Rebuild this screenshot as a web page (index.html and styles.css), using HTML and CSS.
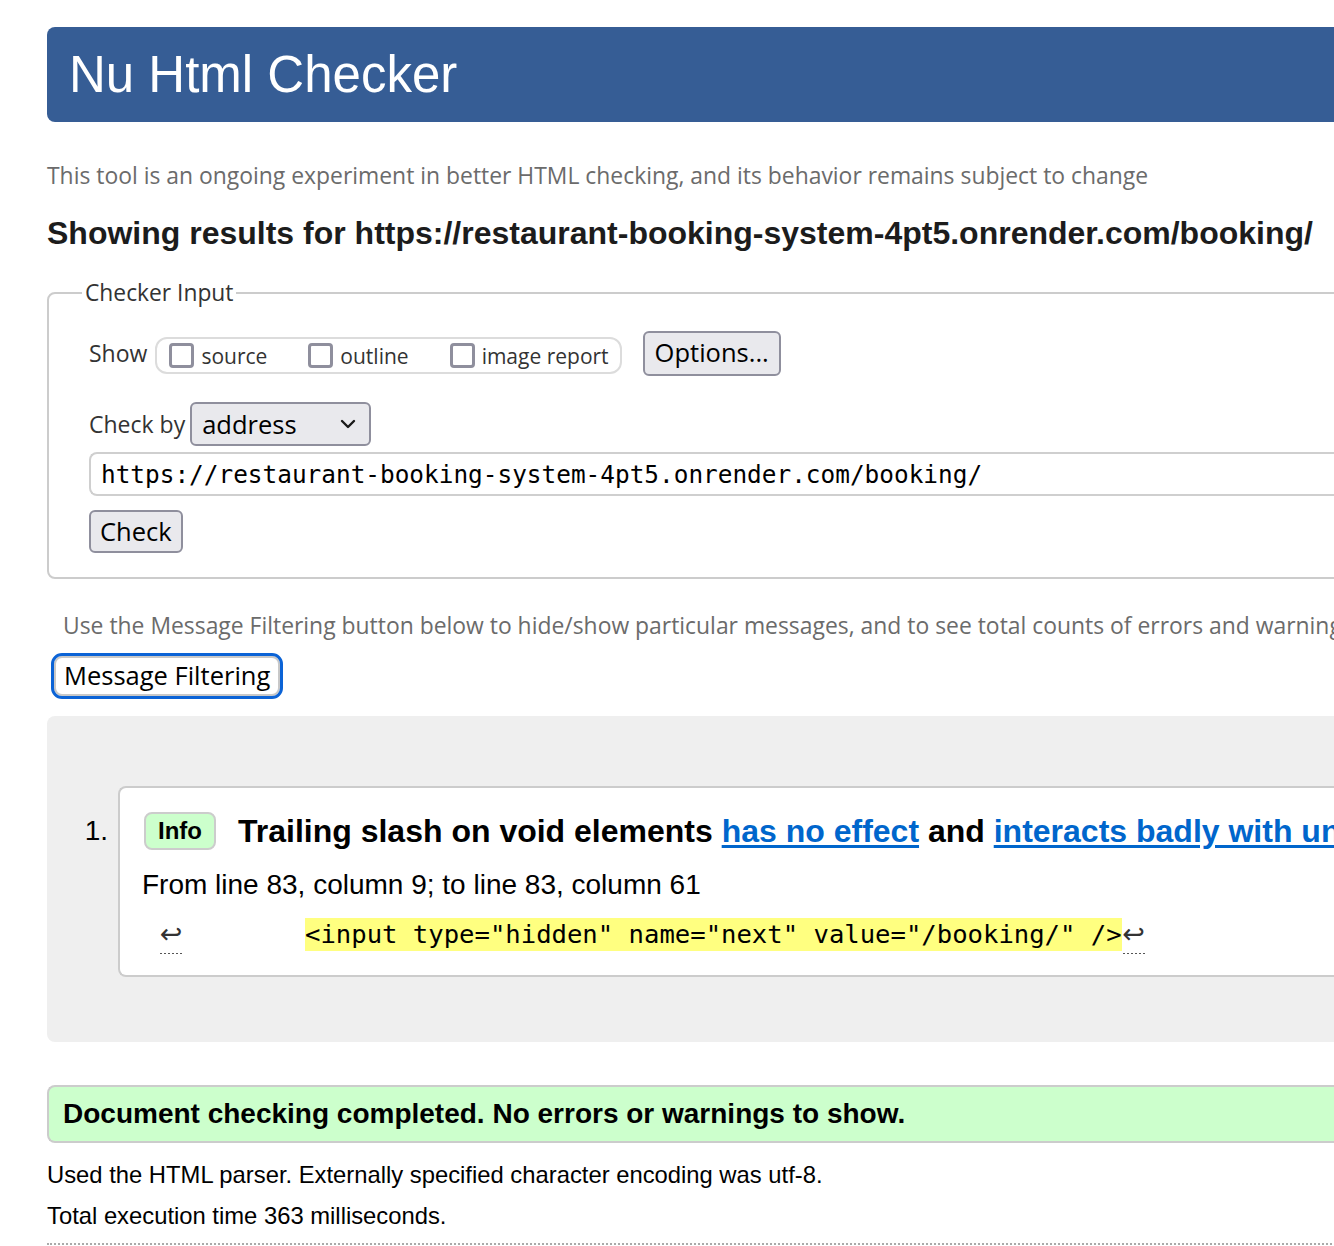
FILE: index.html
```html
<!DOCTYPE html>
<html lang="en">
<head>
<meta charset="utf-8">
<title>Nu Html Checker</title>
<link rel="stylesheet" href="styles.css">
</head>
<body>
<div class="page">
  <header class="banner"><h1>Nu Html Checker</h1></header>
  <p class="intro">This tool is an ongoing experiment in better HTML checking, and its behavior remains subject to change</p>
  <h2 class="showing">Showing results for https://restaurant-booking-system-4pt5.onrender.com/booking/</h2>

  <fieldset class="checker">
    <legend>Checker Input</legend>
    <div class="show-row">
      <span class="lbl">Show</span>
      <div class="opts">
        <label class="opt"><span class="cb"></span>source</label>
        <label class="opt"><span class="cb"></span>outline</label>
        <label class="opt"><span class="cb"></span>image report</label>
      </div>
      <button class="btn options">Options...</button>
    </div>
    <div class="checkby-row">
      <span class="lbl">Check by</span>
      <div class="select"><span>address</span>
        <svg class="chev" width="16" height="10" viewBox="0 0 16 10"><polyline points="2,2 8,8 14,2" fill="none" stroke="#1a1a1a" stroke-width="2.4" stroke-linecap="round" stroke-linejoin="round"/></svg>
      </div>
    </div>
    <div class="url">https://restaurant-booking-system-4pt5.onrender.com/booking/</div>
    <button class="btn check">Check</button>
  </fieldset>

  <p class="filter-note">Use the Message Filtering button below to hide/show particular messages, and to see total counts of errors and warnings.</p>
  <button class="filter">Message Filtering</button>

  <div class="results">
    <ol class="msgs">
      <li class="msg">
        <span class="num">1.</span>
        <div class="card">
          <div class="title-line">
            <span class="badge">Info</span>
            <span class="title">Trailing slash on void elements <a href="#">has no effect</a> and <a href="#">interacts badly with unquoted attribute values</a>.</span>
          </div>
          <p class="loc">From line 83, column 9; to line 83, column 61</p>
          <p class="extract"><span class="lf lf-first">↩</span><mark class="hl">&lt;input type="hidden" name="next" value="/booking/" /&gt;</mark><span class="lf">↩</span></p>
        </div>
      </li>
    </ol>
  </div>

  <p class="success">Document checking completed. No errors or warnings to show.</p>
  <p class="stat first">Used the HTML parser. Externally specified character encoding was utf-8.</p>
  <p class="stat">Total execution time 363 milliseconds.</p>
  <div class="dotted"></div>
</div>
</body>
</html>
```

FILE: styles.css
```css
html, body {
  margin: 0;
  padding: 0;
  overflow: hidden;
  background: #fff;
}
body {
  font-family: "Liberation Sans", Arial, sans-serif;
  font-size: 24px;
  color: #000;
}
.page {
  width: 1500px;
  padding: 27px 0 0 47px;
}
.banner {
  height: 95px;
  background: #365d95;
  border-radius: 8px;
  display: flex;
  align-items: center;
  padding-left: 22px;
}
.banner h1 {
  margin: 0;
  font-family: "Liberation Sans", Arial, sans-serif;
  font-weight: normal;
  font-size: 51px;
  color: #fff;
  line-height: 60px;
}
.intro {
  margin: 36px 0 0;
  font-family: "Open Sans", "Noto Sans", sans-serif;
  font-size: 22.9px;
  line-height: 36px;
  color: #6b6b6b;
  white-space: nowrap;
}
.showing {
  margin: 19px 0 0;
  font-size: 32px;
  line-height: 40px;
  font-weight: bold;
  color: #1c1c1c;
  white-space: nowrap;
}
.checker {
  margin: 24px 0 0;
  border: 2px solid #cccccc;
  border-radius: 8px;
  padding: 0 0 24px 40px;
  font-family: "Open Sans", "Noto Sans", sans-serif;
  min-width: 0;
}
.checker legend {
  font-size: 22.8px;
  line-height: 32px;
  color: #333;
  padding: 0 3px;
  margin-left: -7px;
}
.lbl {
  font-size: 23px;
  color: #333;
}
.show-row {
  display: flex;
  align-items: center;
  height: 44px;
  margin-top: 22px;
}
.show-row .lbl {
  margin-right: 8px;
}
.opts {
  display: flex;
  align-items: center;
  height: 37px;
  box-sizing: border-box;
  margin-top: 5px;
  border: 2px solid #dcdcdc;
  border-radius: 12px;
  padding: 0 11px 0 12px;
  gap: 41px;
}
.opt {
  display: flex;
  align-items: center;
  gap: 7px;
  font-size: 21px;
  color: #333;
}
.cb {
  width: 25px;
  height: 25px;
  box-sizing: border-box;
  border: 3px solid #8f8f9d;
  border-radius: 4px;
  background: #fff;
}
.btn {
  font-family: "Open Sans", "Noto Sans", sans-serif;
  font-size: 25.5px;
  color: #000;
  background: #e9e9ed;
  border: 2px solid #8f8f9d;
  border-radius: 6px;
  padding: 0 10px;
  box-sizing: border-box;
  line-height: 1;
}
.options {
  height: 45px;
  margin-left: 21px;
}
.checkby-row {
  display: flex;
  align-items: center;
  height: 44px;
  margin-top: 27px;
}
.select {
  margin-left: 5px;
  width: 181px;
  height: 44px;
  box-sizing: border-box;
  border: 2px solid #8f8f9d;
  border-radius: 6px;
  background: #e9e9ed;
  display: flex;
  align-items: center;
  justify-content: space-between;
  padding: 0 13px 0 10px;
  font-size: 25.5px;
  color: #000;
}
.url {
  margin-top: 6px;
  height: 44px;
  box-sizing: border-box;
  border: 2px solid #cfcfcf;
  border-right: none;
  border-radius: 8px 0 0 8px;
  padding-left: 10px;
  display: flex;
  align-items: center;
  font-family: "DejaVu Sans Mono", monospace;
  font-size: 24.4px;
  color: #000;
  white-space: nowrap;
}
.check {
  display: block;
  margin-top: 14px;
  height: 43px;
  padding: 0 9px;
}
.filter-note {
  margin: 29px 0 0 16px;
  font-family: "Open Sans", "Noto Sans", sans-serif;
  font-size: 22.9px;
  line-height: 36px;
  color: #6b6b6b;
  white-space: nowrap;
}
.filter {
  display: block;
  margin: 12px 0 0 7px;
  height: 40px;
  box-sizing: border-box;
  padding: 0 8px;
  background: #fff;
  border: 2px solid #c8c8c8;
  border-radius: 8px;
  outline: 3px solid #0b63d6;
  font-family: "Open Sans", "Noto Sans", sans-serif;
  font-size: 25.5px;
  color: #000;
  line-height: 1;
}
.results {
  margin-top: 20px;
  background: #efefef;
  border-radius: 8px 0 0 8px;
  padding: 70px 0 65px 0;
}
.msgs {
  list-style: none;
  margin: 0;
  padding: 0;
}
.msg {
  display: flex;
  align-items: flex-start;
}
.num {
  width: 71px;
  box-sizing: border-box;
  padding-right: 10px;
  text-align: right;
  font-size: 28px;
  line-height: 36px;
  margin-top: 27px;
  flex: none;
}
.card {
  flex: 1;
  background: #fff;
  border: 2px solid #cccccc;
  border-right: none;
  border-radius: 8px 0 0 8px;
  padding: 24px 0 20px 24px;
}
.title-line {
  display: flex;
  align-items: center;
  gap: 22px;
  height: 38px;
  white-space: nowrap;
}
.badge {
  height: 38px;
  box-sizing: border-box;
  padding: 0 12px;
  display: flex;
  align-items: center;
  background: #ccffcc;
  border: 2px solid #cccccc;
  border-radius: 8px;
  font-weight: bold;
  font-size: 24px;
}
.title {
  font-weight: bold;
  font-size: 32px;
}
.title a {
  color: #0066cc;
  text-decoration: underline;
  text-underline-offset: 3px;
}
.loc {
  margin: 17px 0 0 -2px;
  font-size: 28px;
  line-height: 36px;
}
.extract {
  margin: 15px 0 0;
  font-family: "DejaVu Sans Mono", monospace;
  font-size: 25.6px;
  line-height: 33px;
  white-space: pre;
  display: flex;
  align-items: flex-start;
}
.lf {
  display: inline-block;
  width: 24px;
  text-align: center;
  font-family: "DejaVu Sans", sans-serif;
  font-size: 27px;
  color: #333;
  background-image: radial-gradient(circle, #555 0.9px, transparent 1.1px);
  background-size: 4px 3px;
  background-repeat: repeat-x;
  background-position: 0 100%;
  line-height: 32px;
  height: 37px;
  box-sizing: border-box;
}
.lf-first {
  margin-left: 15px;
}
.hl {
  margin-left: 122px;
  background: #ffff80;
  color: #000;
  font-weight: normal;
}
.success {
  margin: 43px 0 0;
  height: 58px;
  box-sizing: border-box;
  border: 2px solid #cccccc;
  border-right: none;
  border-radius: 8px 0 0 8px;
  background: #ccffcc;
  padding-left: 14px;
  display: flex;
  align-items: center;
  font-weight: bold;
  font-size: 28px;
}
.stat {
  margin: 5px 0 0;
  font-size: 23.8px;
  line-height: 36px;
}
.stat.first {
  margin-top: 14px;
}
.dotted {
  margin-top: 9px;
  border-top: 2px dotted #aaaaaa;
}
```
